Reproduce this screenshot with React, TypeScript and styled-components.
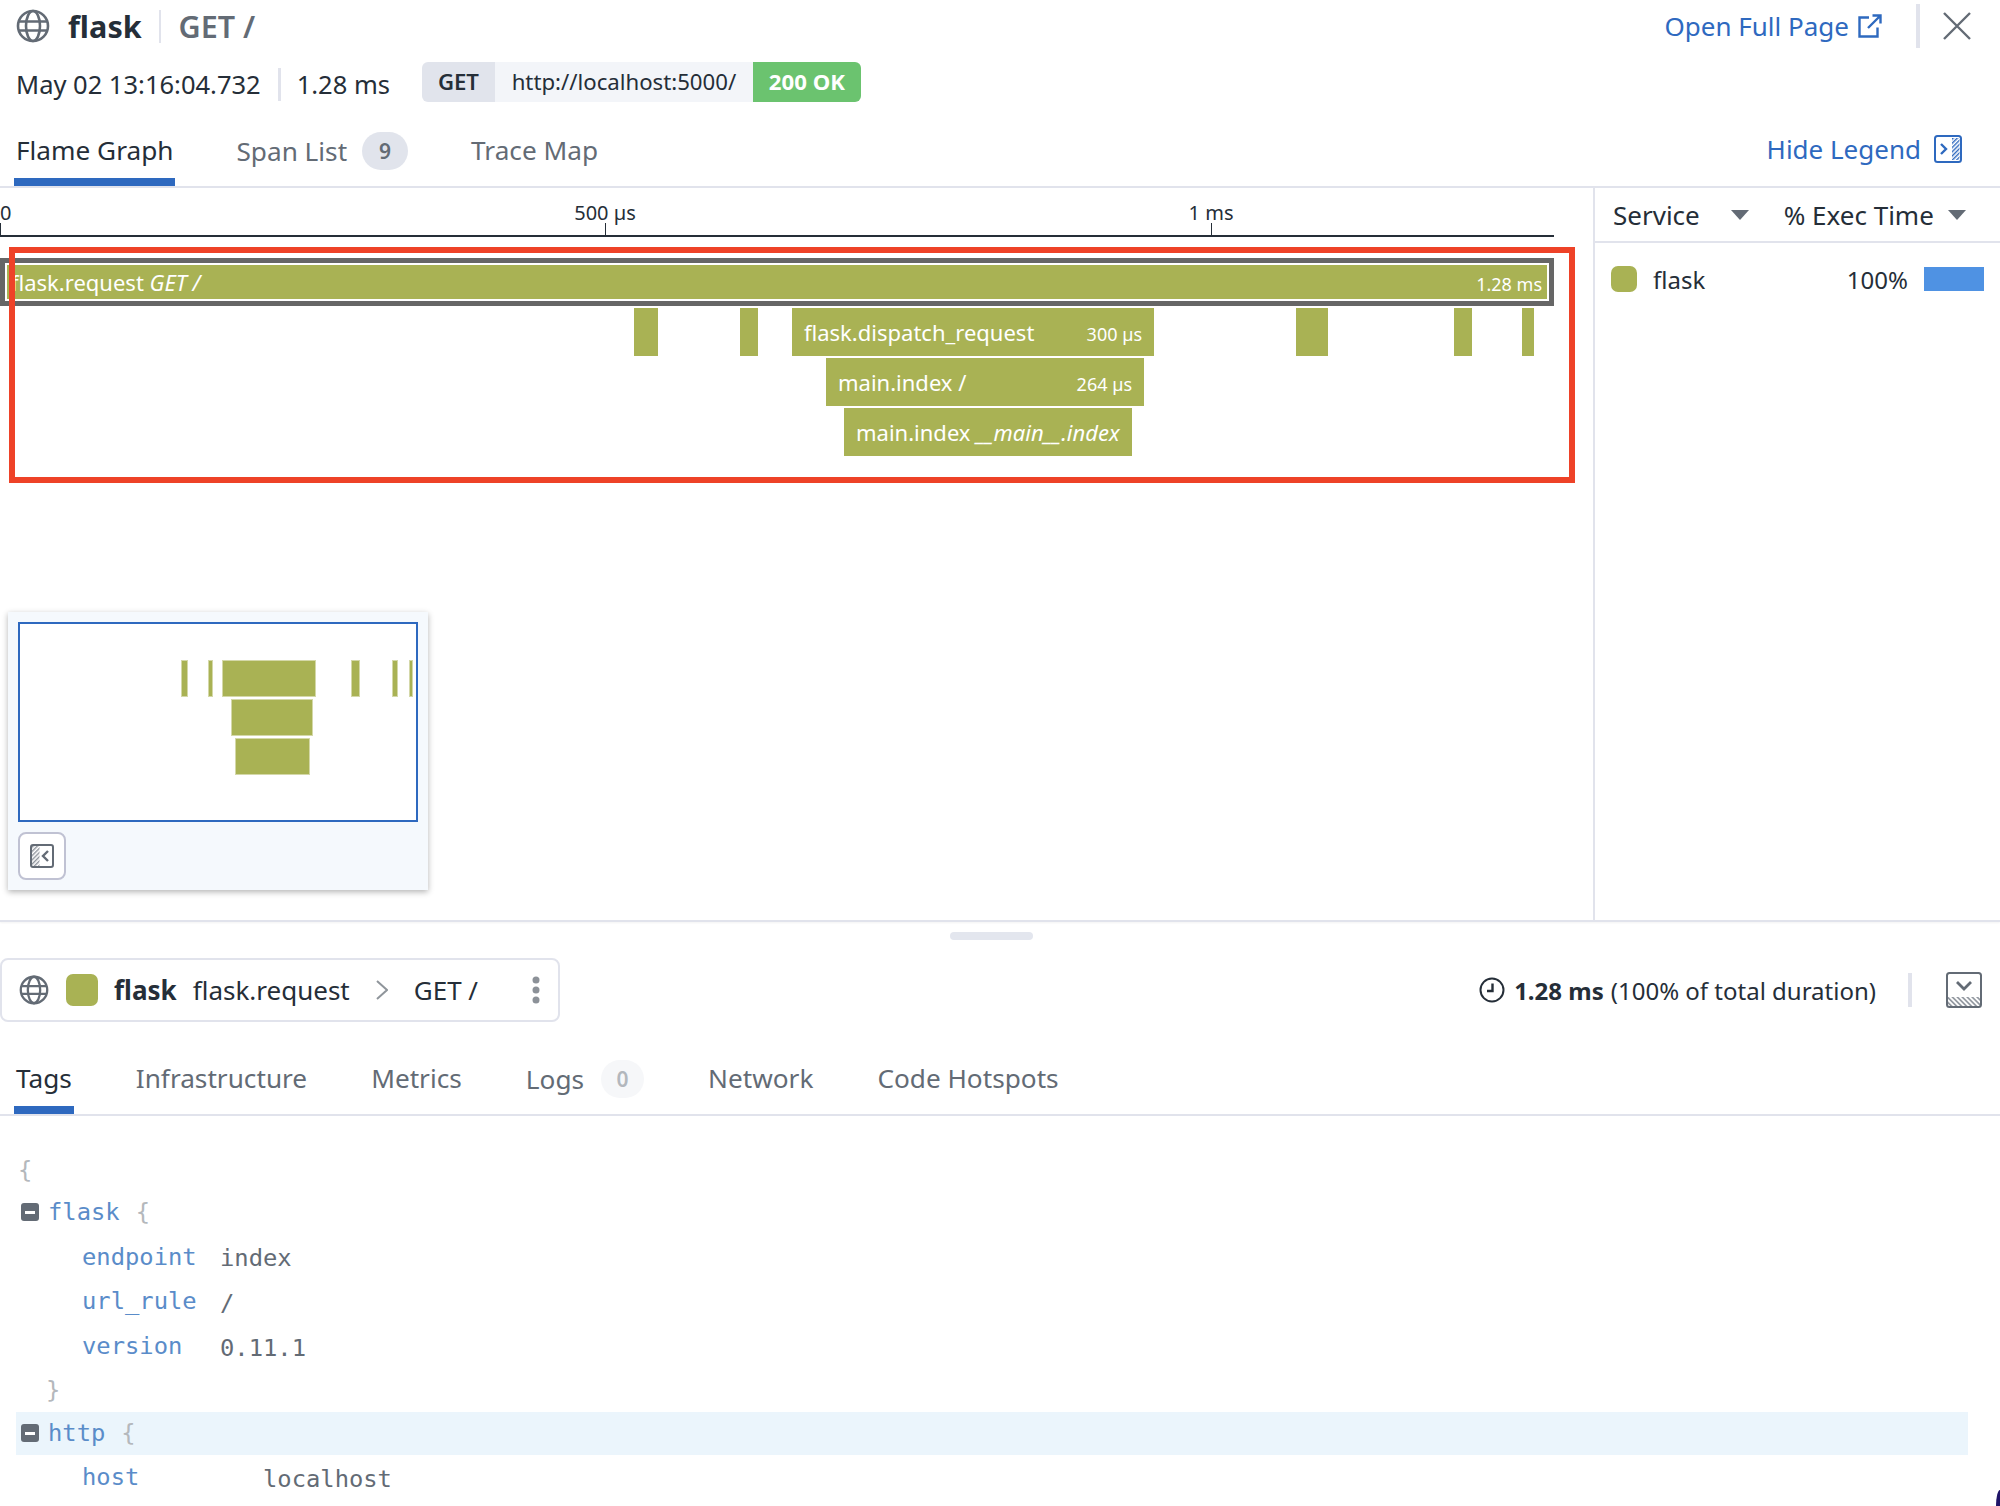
import * as React from 'react';
import styled, { createGlobalStyle } from 'styled-components';

const OLIVE = '#a9b254';
const BLUE = '#2e69bf';
const LINE = '#e1e3ec';
const INK = '#252e38';
const GREY = '#636b75';

const GlobalStyle = createGlobalStyle`
  html, body {
    margin: 0;
    padding: 0;
    background: #fff;
  }
  * {
    box-sizing: border-box;
  }
  body {
    font-family: "Noto Sans", "Open Sans", sans-serif;
    color: ${INK};
  }
`;

const Page = styled.div`
  width: 2000px;
  height: 1506px;
  overflow: hidden;
  background: #fff;
  display: flex;
  flex-direction: column;
  position: relative;
`;

/* top header */

const Header = styled.div`
  height: 188px;
  flex: none;
  border-bottom: 2px solid ${LINE};
  display: flex;
  justify-content: space-between;
`;

const HeaderLeft = styled.div`
  display: flex;
  flex-direction: column;
  padding-left: 16px;
`;

const TitleRow = styled.div`
  height: 52px;
  display: flex;
  align-items: center;
`;

const ServiceName = styled.span`
  font-size: 30.5px;
  font-weight: 700;
  margin-left: 18px;
`;

const TitleDivider = styled.span`
  width: 2px;
  height: 33px;
  background: ${LINE};
  margin: 0 18px 0 17px;
`;

const ResourceName = styled.span`
  font-size: 30.5px;
  font-weight: 600;
  color: ${GREY};
`;

const MetaRow = styled.div`
  height: 44px;
  margin-top: 10px;
  display: flex;
  align-items: center;
  font-size: 25.5px;
`;

const MetaDivider = styled.span`
  width: 3px;
  height: 33px;
  background: ${LINE};
  margin: 0 16px 0 17px;
`;

const Chip = styled.div`
  margin-left: 32px;
  height: 40px;
  align-self: flex-start;
  display: flex;
  border-radius: 6px;
  overflow: hidden;
  font-size: 22.2px;
  line-height: 40px;
`;

const ChipMethod = styled.span`
  width: 73px;
  text-align: center;
  font-weight: 600;
  background: #e1e4ec;
`;

const ChipUrl = styled.span`
  width: 258px;
  text-align: center;
  background: #f3f5f9;
`;

const ChipStatus = styled.span`
  width: 108px;
  text-align: center;
  font-weight: 700;
  color: #fff;
  background: #6bc36f;
`;

const Tabs = styled.div<{ $gap: number }>`
  display: flex;
  align-items: flex-start;
  gap: ${(p) => p.$gap}px;
`;

const Tab = styled.div<{ $active?: boolean }>`
  font-size: 26.2px;
  line-height: 36px;
  color: ${(p) => (p.$active ? INK : GREY)};
  display: flex;
  align-items: center;
  white-space: nowrap;
`;

const ActiveMark = styled.div`
  height: 8px;
  margin: 10px -2px 0;
  background: ${BLUE};
`;

const TabCell = styled.div`
  display: flex;
  flex-direction: column;
`;

const CountBadge = styled.span<{ $pale?: boolean }>`
  width: ${(p) => (p.$pale ? 43 : 46)}px;
  height: 38px;
  border-radius: 19px;
  margin-left: ${(p) => (p.$pale ? 17 : 15)}px;
  background: ${(p) => (p.$pale ? '#f6f7f9' : '#e1e4ec')};
  color: ${(p) => (p.$pale ? '#b3b7bd' : GREY)};
  font-size: 21px;
  font-weight: 600;
  display: flex;
  align-items: center;
  justify-content: center;
`;

const TopTabs = styled(Tabs)`
  margin-top: 26px;
`;

const HeaderRight = styled.div`
  display: flex;
  flex-direction: column;
  align-items: flex-end;
  padding-right: 28px;
`;

const ActionRow = styled.div`
  display: flex;
  align-items: center;
  height: 52px;
`;

const BlueLink = styled.span`
  font-size: 26px;
  color: ${BLUE};
  display: flex;
  align-items: center;
  gap: 9px;
  white-space: nowrap;
`;

const ActionDivider = styled.span`
  width: 4px;
  height: 44px;
  background: ${LINE};
  margin: 0 22px 0 34px;
`;

const LegendToggle = styled(BlueLink)`
  margin-top: 79px;
  margin-right: 10px;
  gap: 13px;
`;

/* flame graph + legend */

const GraphArea = styled.div`
  height: 734px;
  flex: none;
  display: flex;
  border-bottom: 2px solid ${LINE};
  box-shadow: 0 1px 2px rgba(0, 0, 0, 0.05);
`;

const Graph = styled.div`
  width: 1593px;
  flex: none;
  position: relative;
  padding-top: 10px;
`;

const Axis = styled.div`
  width: 1554px;
  height: 39px;
  border-bottom: 2px solid ${INK};
  position: relative;
`;

const AxisTick = styled.div<{ $x: number }>`
  position: absolute;
  left: ${(p) => p.$x}px;
  bottom: 0;
  width: 1px;
  height: 12px;
  background: ${INK};
`;

const AxisLabel = styled.span<{ $x: number; $start?: boolean }>`
  position: absolute;
  left: ${(p) => p.$x}px;
  top: 2px;
  font-size: 20px;
  line-height: 26px;
  white-space: nowrap;
  transform: ${(p) => (p.$start ? 'none' : 'translateX(-50%)')};
`;

const Flame = styled.div`
  margin-top: 21px;
  display: flex;
  flex-direction: column;
`;

const RootSpan = styled.div`
  width: 1554px;
  height: 48px;
  border: 5px solid #666;
  outline: 2px solid #fff;
  outline-offset: -7px;
  background: ${OLIVE};
  color: #fff;
  font-size: 22px;
  display: flex;
  align-items: center;
  justify-content: space-between;
  padding: 0 7px 0 6px;
`;

const SpanRow = styled.div`
  height: 48px;
  margin-top: 2px;
  position: relative;
`;

const Span = styled.div<{ $x: number; $w: number }>`
  position: absolute;
  top: 0;
  bottom: 0;
  left: ${(p) => p.$x}px;
  width: ${(p) => p.$w}px;
  background: ${OLIVE};
`;

const NamedSpan = styled(Span)`
  color: #fff;
  font-size: 22px;
  padding: 0 12px;
  display: flex;
  align-items: center;
  justify-content: space-between;
  white-space: nowrap;
`;

const SpanTime = styled.span`
  font-size: 18px;
  margin-top: 3px;
`;

const Highlight = styled.div`
  position: absolute;
  left: 9px;
  top: 59px;
  width: 1566px;
  height: 236px;
  border: 6px solid #ee4228;
  pointer-events: none;
`;

const Minimap = styled.div`
  position: absolute;
  left: 8px;
  top: 424px;
  width: 420px;
  height: 278px;
  padding: 10px;
  background: #f5f9fd;
  box-shadow: 0 2px 6px rgba(0, 0, 0, 0.3);
  display: flex;
  flex-direction: column;
`;

const MiniFrame = styled.div`
  height: 200px;
  background: #fff;
  border: 2px solid ${BLUE};
  padding-top: 36px;
  display: flex;
  flex-direction: column;
  gap: 2px;
`;

const MiniRow = styled.div`
  height: 37px;
  position: relative;
`;

const MiniBar = styled.div<{ $x: number; $w: number }>`
  position: absolute;
  top: 0;
  bottom: 0;
  left: ${(p) => p.$x}px;
  width: ${(p) => p.$w}px;
  background: ${OLIVE};
  border: 1px solid #d4d8a8;
`;

const IconButton = styled.div`
  width: 48px;
  height: 48px;
  margin-top: 10px;
  background: #fff;
  border: 2px solid #c0c2d3;
  border-radius: 8px;
  display: flex;
  align-items: center;
  justify-content: center;
`;

const Legend = styled.div`
  flex: 1;
  border-left: 2px solid ${LINE};
`;

const LegendHead = styled.div`
  height: 55px;
  border-bottom: 2px solid ${LINE};
  padding: 0 33px 0 18px;
  display: flex;
  align-items: center;
  font-size: 26px;
`;

const HeadLabel = styled.span<{ $gap?: number }>`
  white-space: nowrap;
  margin-left: ${(p) => p.$gap ?? 0}px;
`;

const Caret = styled.span<{ $gap: number }>`
  width: 0;
  height: 0;
  margin-left: ${(p) => p.$gap}px;
  border-left: 9px solid transparent;
  border-right: 9px solid transparent;
  border-top: 10px solid ${GREY};
`;

const LegendRow = styled.div`
  display: flex;
  align-items: center;
  height: 26px;
  margin-top: 23px;
  padding-left: 16px;
  font-size: 24px;
`;

const Swatch = styled.span<{ $size: number; $gap?: number }>`
  width: ${(p) => p.$size}px;
  height: ${(p) => p.$size}px;
  flex: none;
  margin-left: ${(p) => p.$gap ?? 0}px;
  border-radius: 7px;
  background: ${OLIVE};
`;

const LegendName = styled.span`
  margin-left: 16px;
  flex: 1;
`;

const LegendPct = styled.span`
  margin-right: 16px;
`;

const LegendBar = styled.span`
  width: 60px;
  height: 24px;
  margin-right: 16px;
  background: #4f92e3;
`;

/* span detail */

const Detail = styled.div`
  flex: 1;
  display: flex;
  flex-direction: column;
  position: relative;
`;

const Handle = styled.div`
  position: absolute;
  left: 950px;
  top: 10px;
  width: 83px;
  height: 8px;
  border-radius: 4px;
  background: #e3e6ee;
`;

const SpanBar = styled.div`
  margin-top: 36px;
  height: 64px;
  flex: none;
  display: flex;
  align-items: center;
  justify-content: space-between;
  padding-right: 18px;
`;

const SpanCard = styled.div`
  width: 560px;
  height: 64px;
  border: 2px solid ${LINE};
  border-radius: 8px;
  display: flex;
  align-items: center;
  padding-left: 17px;
  font-size: 26px;
  white-space: nowrap;
`;

const CardService = styled.span`
  font-weight: 700;
  margin-left: 16px;
`;

const CardOperation = styled.span`
  margin-left: 16px;
`;

const CardChevron = styled.span`
  margin-left: 26px;
  display: flex;
`;

const CardResource = styled.span`
  margin-left: 26px;
  flex: 1;
`;

const CardDots = styled.span`
  margin-right: 18px;
  display: flex;
`;

const Duration = styled.div`
  display: flex;
  align-items: center;
  font-size: 24px;
  white-space: nowrap;
`;

const DurationValue = styled.strong`
  font-weight: 700;
  margin: 0 7px 0 9px;
`;

const DurationDivider = styled.span`
  width: 4px;
  height: 34px;
  background: ${LINE};
  margin: 0 34px 0 32px;
`;

const DetailTabs = styled(Tabs)`
  padding: 38px 0 0 16px;
`;

const DetailTabsLine = styled.div`
  height: 94px;
  flex: none;
  border-bottom: 2px solid ${LINE};
`;

const Code = styled.div`
  padding: 33px 32px 0 16px;
  font-family: "DejaVu Sans Mono", "Liberation Mono", monospace;
  font-size: 23.8px;
`;

const Line = styled.div<{ $hl?: boolean; $indent?: number; $h?: number }>`
  height: ${(p) => p.$h ?? 44.6}px;
  display: flex;
  align-items: center;
  padding-left: ${(p) => p.$indent ?? 0}px;
  background: ${(p) => (p.$hl ? '#ebf5fc' : 'transparent')};
  white-space: pre;
`;

const Key = styled.span<{ $w?: number }>`
  color: #5a8cc9;
  width: ${(p) => (p.$w ? `${p.$w}px` : 'auto')};
  flex: none;
`;

const Value = styled.span`
  color: ${GREY};
  margin-top: 3px;
`;

const Brace = styled.span<{ $gap?: number }>`
  color: #b4b8bc;
  margin-left: ${(p) => p.$gap ?? 0}px;
`;

const Collapse = styled.span`
  width: 18px;
  height: 18px;
  flex: none;
  margin: 0 9px 0 5px;
  border-radius: 3px;
  background: ${GREY};
  display: flex;
  align-items: center;
  justify-content: center;
  &::before {
    content: '';
    width: 10px;
    height: 3px;
    background: #fff;
  }
`;

const Corner = styled.div`
  position: absolute;
  right: 0;
  bottom: 0;
  width: 4px;
  height: 16px;
  background: #1f1468;
  border-top-left-radius: 100%;
`;

/* drawings */

const Globe = ({ size }: { size: number }) => (
  <svg width={size} height={size} viewBox="0 0 34 34" fill="none" stroke={GREY} strokeWidth="2.6">
    <circle cx="17" cy="17" r="15" />
    <ellipse cx="17" cy="17" rx="7" ry="15" />
    <path d="M2.5 12.5h29M2.5 21.5h29" />
  </svg>
);

const ExternalIcon = () => (
  <svg width="24" height="24" viewBox="0 0 24 24" fill="none" stroke={BLUE} strokeWidth="2.4">
    <path d="M11 3.5H1.5v19h18v-9" />
    <path d="M10 14L22 2M14.5 1.5h8v8" />
  </svg>
);

const CloseIcon = () => (
  <svg width="30" height="30" viewBox="0 0 30 30" fill="none" stroke={GREY} strokeWidth="2.4">
    <path d="M2 2l26 26M28 2L2 28" />
  </svg>
);

const Hatch = ({ id, color }: { id: string; color: string }) => (
  <pattern id={id} width="3" height="3" patternUnits="userSpaceOnUse" patternTransform="rotate(45)">
    <rect width="1.4" height="3" fill={color} />
  </pattern>
);

const HideLegendIcon = () => (
  <svg width="28" height="28" viewBox="0 0 28 28" fill="none">
    <defs>
      <Hatch id="legendHatch" color={BLUE} />
    </defs>
    <rect x="18" y="3" width="7.5" height="22" fill="url(#legendHatch)" />
    <rect x="1" y="1" width="26" height="26" rx="2.5" stroke={BLUE} strokeWidth="2" />
    <path d="M7 9l5 5-5 5" stroke={BLUE} strokeWidth="2.4" />
  </svg>
);

const CollapseMapIcon = () => (
  <svg width="24" height="24" viewBox="0 0 24 24" fill="none">
    <defs>
      <Hatch id="mapHatch" color="#8d939b" />
    </defs>
    <rect x="2" y="2" width="7.5" height="20" fill="url(#mapHatch)" />
    <rect x="1" y="1" width="22" height="22" rx="2" stroke={GREY} strokeWidth="2" />
    <path d="M18 7l-5 5 5 5" stroke={GREY} strokeWidth="2.4" />
  </svg>
);

const ChevronIcon = () => (
  <svg width="12" height="20" viewBox="0 0 12 20" fill="none" stroke="#8f959b" strokeWidth="2">
    <path d="M1 1l10 9-10 9" />
  </svg>
);

const DotsIcon = () => (
  <svg width="8" height="28" viewBox="0 0 8 28" fill="#8c9198">
    <circle cx="4" cy="4" r="3.5" />
    <circle cx="4" cy="14" r="3.5" />
    <circle cx="4" cy="24" r="3.5" />
  </svg>
);

const ClockIcon = () => (
  <svg width="26" height="26" viewBox="0 0 26 26" fill="none" stroke={INK} strokeWidth="2">
    <circle cx="13" cy="13" r="11.5" />
    <path d="M13.5 6.5v7.5H8" strokeWidth="2.4" />
  </svg>
);

const CollapsePanelIcon = () => (
  <svg width="36" height="36" viewBox="0 0 36 36" fill="none">
    <defs>
      <pattern id="panelHatch" width="3.5" height="3.5" patternUnits="userSpaceOnUse" patternTransform="rotate(-45)">
        <rect width="1.6" height="3.5" fill="#8d939b" />
      </pattern>
    </defs>
    <rect x="2" y="25" width="32" height="9" fill="url(#panelHatch)" />
    <rect x="1" y="1" width="34" height="34" rx="2.5" stroke={GREY} strokeWidth="2" />
    <path d="M11 10l7 7 7-7" stroke={GREY} strokeWidth="2.8" />
  </svg>
);

const MINOR_SPANS = [
  { x: 634, w: 24 },
  { x: 740, w: 18 },
  { x: 1296, w: 32 },
  { x: 1454, w: 18 },
  { x: 1522, w: 12 },
];

const MINI_ROWS = [
  [
    { x: 161, w: 7 },
    { x: 188, w: 5 },
    { x: 202, w: 94 },
    { x: 331, w: 9 },
    { x: 372, w: 6 },
    { x: 389, w: 4 },
  ],
  [{ x: 211, w: 82 }],
  [{ x: 215, w: 75 }],
];

export default function App() {
  return (
    <Page>
      <GlobalStyle />
      <Header>
        <HeaderLeft>
          <TitleRow>
            <Globe size={34} />
            <ServiceName>flask</ServiceName>
            <TitleDivider />
            <ResourceName>GET /</ResourceName>
          </TitleRow>
          <MetaRow>
            <span>May 02 13:16:04.732</span>
            <MetaDivider />
            <span>1.28 ms</span>
            <Chip>
              <ChipMethod>GET</ChipMethod>
              <ChipUrl>http://localhost:5000/</ChipUrl>
              <ChipStatus>200 OK</ChipStatus>
            </Chip>
          </MetaRow>
          <TopTabs $gap={63}>
            <TabCell>
              <Tab $active>Flame Graph</Tab>
              <ActiveMark />
            </TabCell>
            <Tab>
              Span List
              <CountBadge>9</CountBadge>
            </Tab>
            <Tab>Trace Map</Tab>
          </TopTabs>
        </HeaderLeft>
        <HeaderRight>
          <ActionRow>
            <BlueLink>
              Open Full Page
              <ExternalIcon />
            </BlueLink>
            <ActionDivider />
            <CloseIcon />
          </ActionRow>
          <LegendToggle>
            Hide Legend
            <HideLegendIcon />
          </LegendToggle>
        </HeaderRight>
      </Header>

      <GraphArea>
        <Graph>
          <Axis>
            <AxisTick $x={0} />
            <AxisLabel $x={0} $start>0</AxisLabel>
            <AxisTick $x={605} />
            <AxisLabel $x={605}>500 µs</AxisLabel>
            <AxisTick $x={1211} />
            <AxisLabel $x={1211}>1 ms</AxisLabel>
          </Axis>
          <Flame>
            <RootSpan>
              <span>
                flask.request <em>GET /</em>
              </span>
              <SpanTime>1.28 ms</SpanTime>
            </RootSpan>
            <SpanRow>
              {MINOR_SPANS.map((s) => (
                <Span key={s.x} $x={s.x} $w={s.w} />
              ))}
              <NamedSpan $x={792} $w={362}>
                <span>flask.dispatch_request</span>
                <SpanTime>300 µs</SpanTime>
              </NamedSpan>
            </SpanRow>
            <SpanRow>
              <NamedSpan $x={826} $w={318}>
                <span>main.index /</span>
                <SpanTime>264 µs</SpanTime>
              </NamedSpan>
            </SpanRow>
            <SpanRow>
              <NamedSpan $x={844} $w={288}>
                <span>
                  main.index <em>__main__.index</em>
                </span>
              </NamedSpan>
            </SpanRow>
          </Flame>
          <Highlight />
          <Minimap>
            <MiniFrame>
              {MINI_ROWS.map((row) => (
                <MiniRow key={row[0].x}>
                  {row.map((b) => (
                    <MiniBar key={b.x} $x={b.x} $w={b.w} />
                  ))}
                </MiniRow>
              ))}
            </MiniFrame>
            <IconButton>
              <CollapseMapIcon />
            </IconButton>
          </Minimap>
        </Graph>
        <Legend>
          <LegendHead>
            <HeadLabel>Service</HeadLabel>
            <Caret $gap={31} />
            <HeadLabel $gap={35}>% Exec Time</HeadLabel>
            <Caret $gap={14} />
          </LegendHead>
          <LegendRow>
            <Swatch $size={26} />
            <LegendName>flask</LegendName>
            <LegendPct>100%</LegendPct>
            <LegendBar />
          </LegendRow>
        </Legend>
      </GraphArea>

      <Detail>
        <Handle />
        <SpanBar>
          <SpanCard>
            <Globe size={30} />
            <Swatch $size={32} $gap={17} />
            <CardService>flask</CardService>
            <CardOperation>flask.request</CardOperation>
            <CardChevron>
              <ChevronIcon />
            </CardChevron>
            <CardResource>GET /</CardResource>
            <CardDots>
              <DotsIcon />
            </CardDots>
          </SpanCard>
          <Duration>
            <ClockIcon />
            <DurationValue>1.28 ms</DurationValue>
            (100% of total duration)
            <DurationDivider />
            <CollapsePanelIcon />
          </Duration>
        </SpanBar>
        <DetailTabsLine>
          <DetailTabs $gap={64}>
            <TabCell>
              <Tab $active>Tags</Tab>
              <ActiveMark />
            </TabCell>
            <Tab>Infrastructure</Tab>
            <Tab>Metrics</Tab>
            <Tab>
              Logs
              <CountBadge $pale>0</CountBadge>
            </Tab>
            <Tab>Network</Tab>
            <Tab>Code Hotspots</Tab>
          </DetailTabs>
        </DetailTabsLine>
        <Code>
          <Line $h={41}>
            <Brace $gap={2}>{'{'}</Brace>
          </Line>
          <Line>
            <Collapse />
            <Key>flask</Key>
            <Brace $gap={16}>{'{'}</Brace>
          </Line>
          <Line $indent={66}>
            <Key $w={138}>endpoint</Key>
            <Value>index</Value>
          </Line>
          <Line $indent={66}>
            <Key $w={138}>url_rule</Key>
            <Value>/</Value>
          </Line>
          <Line $indent={66}>
            <Key $w={138}>version</Key>
            <Value>0.11.1</Value>
          </Line>
          <Line $indent={30} $h={43.6}>
            <Brace>{'}'}</Brace>
          </Line>
          <Line $hl $h={43}>
            <Collapse />
            <Key>http</Key>
            <Brace $gap={16}>{'{'}</Brace>
          </Line>
          <Line $indent={66}>
            <Key $w={181}>host</Key>
            <Value>localhost</Value>
          </Line>
        </Code>
      </Detail>
      <Corner />
    </Page>
  );
}
